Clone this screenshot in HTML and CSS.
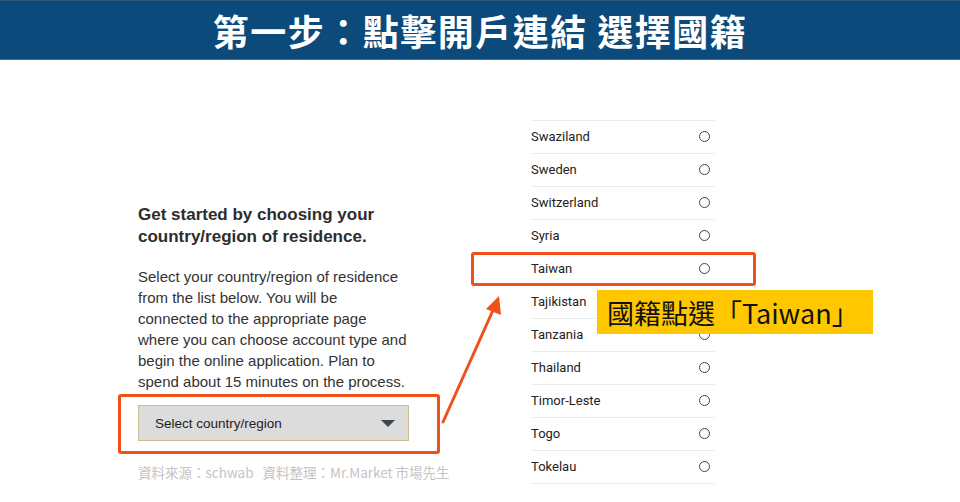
FILE: index.html
```html
<!DOCTYPE html>
<html>
  <head>
    <meta name="viewport" content="width=device-width,initial-scale=1.0" />
    <title>第一步：點擊開戶連結 選擇國籍</title>
    <link rel="stylesheet" href="styles.css">
  </head>
  <body>
    <header class="banner">
      <h1>第一步：點擊開戶連結 選擇國籍</h1>
    </header>

    <div class="slide">
      <div class="intro">
        <h2>Get started by choosing your<br>country/region of residence.</h2>
        <p>Select your country/region of residence<br>from the list below. You will be<br>connected to the appropriate page<br>where you can choose account type and<br>begin the online application. Plan to<br>spend about 15 minutes on the process.</p>
        <div class="select-wrap">
          <div class="select">
            <span>Select country/region</span>
            <span class="caret"></span>
          </div>
          <div class="mark mark-select"></div>
        </div>
        <div class="source">資料來源：schwab&nbsp;&nbsp;&nbsp;資料整理：Mr.Market 市場先生</div>
      </div>

      <ul class="countries">
        <li><span>Swaziland</span><i class="radio"></i></li>
        <li><span>Sweden</span><i class="radio"></i></li>
        <li><span>Switzerland</span><i class="radio"></i></li>
        <li><span>Syria</span><i class="radio"></i></li>
        <li class="picked"><span>Taiwan</span><i class="radio"></i><div class="mark mark-row"></div></li>
        <li><span>Tajikistan</span><i class="radio"></i></li>
        <li><span>Tanzania</span><i class="radio"></i></li>
        <li><span>Thailand</span><i class="radio"></i></li>
        <li><span>Timor-Leste</span><i class="radio"></i></li>
        <li><span>Togo</span><i class="radio"></i></li>
        <li><span>Tokelau</span><i class="radio"></i></li>
      </ul>

      <svg class="arrow" width="960" height="442" viewBox="0 0 960 442">
        <line x1="443" y1="362" x2="494" y2="248" stroke="#f0501a" stroke-width="3" stroke-linecap="round" />
        <polygon points="499,236 501,255 486,249" fill="#f0501a" />
      </svg>

      <div class="note">國籍點選「Taiwan」</div>
    </div>
  </body>
</html>
```

FILE: styles.css
```css
body {
  margin: 0;
  background: #fff;
  font-family: "Liberation Sans", Arial, sans-serif;
  color: #333;
}

.banner {
  background: #0b4a7b;
  border-top: 1px solid #2f5878;
  border-bottom: 1px solid #55697a;
  box-sizing: border-box;
  height: 60px;
  display: flex;
  align-items: center;
  justify-content: center;
}
.banner h1 {
  margin: 0;
  color: #fff;
  font-family: "Noto Sans CJK TC", "Noto Sans CJK SC", sans-serif;
  font-weight: 700;
  font-size: 36px;
  line-height: 1;
  letter-spacing: 1.5px;
}

.slide {
  position: relative;
  display: flex;
  height: 442px;
}

.intro {
  width: 272px;
  margin-left: 138px;
  padding-top: 144px;
}
.intro h2 {
  margin: 0;
  font-size: 17px;
  line-height: 22px;
  font-weight: 700;
  color: #2d2d2d;
  white-space: nowrap;
}
.intro p {
  margin: 18px 0 0;
  font-size: 15px;
  line-height: 21px;
  color: #333;
  white-space: nowrap;
}

.select-wrap {
  position: relative;
  margin-top: 13px;
}
.select {
  height: 36px;
  box-sizing: border-box;
  width: 271px;
  background: #dcdcdc;
  border: 1px solid #cdbf94;
  display: flex;
  align-items: center;
  justify-content: space-between;
  padding: 0 13px 0 16px;
  font-size: 13.5px;
  color: #222;
}
.caret {
  width: 0;
  height: 0;
  border-left: 7px solid transparent;
  border-right: 7px solid transparent;
  border-top: 7px solid #3a4650;
}

.mark {
  position: absolute;
  border: 3px solid #f0501a;
  border-radius: 3px;
}
.mark-select {
  top: -11px;
  bottom: -13px;
  left: -20px;
  right: -30px;
}

.source {
  margin-top: 21px;
  font-family: "Noto Sans CJK TC", "Noto Sans CJK SC", sans-serif;
  font-size: 13.5px;
  color: #c4c4c4;
  white-space: nowrap;
}

.countries {
  list-style: none;
  margin: 60px 0 0 121px;
  padding: 0;
  width: 184px;
  border-top: 1px solid #ececec;
  align-self: flex-start;
  font-family: Roboto, "Liberation Sans", sans-serif;
}
.countries li {
  position: relative;
  height: 33px;
  box-sizing: border-box;
  border-bottom: 1px solid #ececec;
  display: flex;
  align-items: center;
  justify-content: space-between;
  padding-right: 5px;
  padding-bottom: 2px;
  font-size: 13px;
  color: #222;
}
.radio {
  width: 9px;
  height: 9px;
  border: 1px solid #444;
  border-radius: 50%;
}
.mark-row {
  top: -1px;
  bottom: -1px;
  left: -60px;
  right: -41px;
}

.arrow {
  position: absolute;
  left: 0;
  top: 0;
  pointer-events: none;
}

.note {
  position: absolute;
  left: 597px;
  top: 230px;
  width: 276px;
  height: 44px;
  background: #ffc700;
  box-sizing: border-box;
  padding-left: 10px;
  display: flex;
  align-items: center;
  font-family: "Noto Sans CJK TC", "Noto Sans CJK SC", sans-serif;
  font-size: 27px;
  color: #111;
  white-space: nowrap;
}
```
